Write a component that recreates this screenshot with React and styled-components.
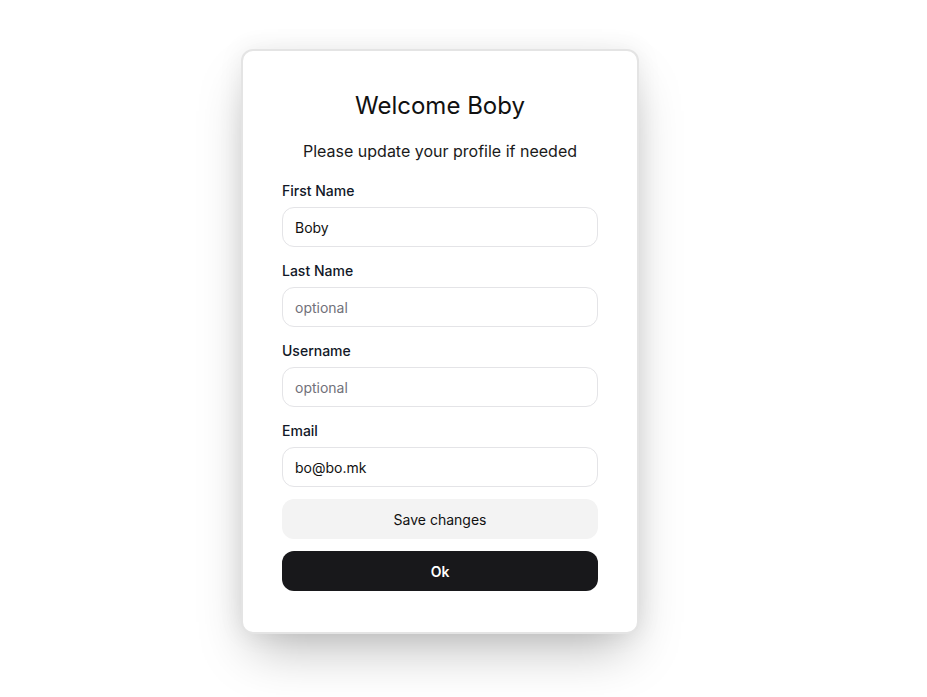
import React, { useState } from "react";
import styled, { createGlobalStyle } from "styled-components";

const GlobalStyle = createGlobalStyle`
  html, body {
    margin: 0;
    background: #ffffff;
    font-family: Inter, "Noto Sans", sans-serif;
    color: #111111;
  }
`;

const Page = styled.div`
  min-height: 697px;
  padding: 49px 0 0 241px;
  box-sizing: border-box;
`;

const Card = styled.form`
  width: 398px;
  box-sizing: border-box;
  padding: 39px 39px 41px;
  background: #ffffff;
  border: 2px solid #e4e4e4;
  border-radius: 12px;
  box-shadow: 0 25px 50px -12px rgba(0, 0, 0, 0.28), 0 0 26px rgba(0, 0, 0, 0.07);
  display: flex;
  flex-direction: column;
`;

const Title = styled.h1`
  margin: 0;
  font-size: 24px;
  line-height: 32px;
  font-weight: 400;
  text-align: center;
  color: #111111;
`;

const Subtitle = styled.p`
  margin: 17px 0 18px;
  font-size: 16px;
  line-height: 24px;
  text-align: center;
  color: #1a1a1a;
`;

const Fields = styled.div`
  display: flex;
  flex-direction: column;
  gap: 14px;
`;

const Field = styled.label`
  display: flex;
  flex-direction: column;
  gap: 6px;
`;

const Label = styled.span`
  font-size: 14px;
  line-height: 20px;
  font-weight: 450;
  color: #111827;
`;

const Input = styled.input`
  height: 40px;
  box-sizing: border-box;
  border: 1px solid #e4e4e7;
  border-radius: 12px;
  padding: 0 12px;
  font-family: inherit;
  font-size: 14px;
  color: #111111;
  background: #ffffff;
  outline: none;

  &::placeholder {
    color: #71717a;
  }
`;

const Button = styled.button`
  height: 40px;
  border: none;
  border-radius: 12px;
  font-family: inherit;
  font-size: 14px;
  cursor: pointer;
  margin-top: 12px;
  background: ${(p) => (p.$primary ? "#18181b" : "#f3f3f3")};
  color: ${(p) => (p.$primary ? "#ffffff" : "#111111")};
  font-weight: ${(p) => (p.$primary ? 600 : 400)};
`;

const fieldsInit = [
  { key: "first", label: "First Name", value: "Boby" },
  { key: "last", label: "Last Name", value: "" },
  { key: "username", label: "Username", value: "" },
  { key: "email", label: "Email", value: "bo@bo.mk" },
];

export default function App() {
  const [values, setValues] = useState(
    Object.fromEntries(fieldsInit.map((f) => [f.key, f.value]))
  );

  return (
    <Page>
      <GlobalStyle />
      <Card onSubmit={(e) => e.preventDefault()}>
        <Title>Welcome Boby</Title>
        <Subtitle>Please update your profile if needed</Subtitle>
        <Fields>
          {fieldsInit.map((f) => (
            <Field key={f.key}>
              <Label>{f.label}</Label>
              <Input
                value={values[f.key]}
                placeholder="optional"
                onChange={(e) =>
                  setValues({ ...values, [f.key]: e.target.value })
                }
              />
            </Field>
          ))}
        </Fields>
        <Button type="button">Save changes</Button>
        <Button $primary type="submit">
          Ok
        </Button>
      </Card>
    </Page>
  );
}
